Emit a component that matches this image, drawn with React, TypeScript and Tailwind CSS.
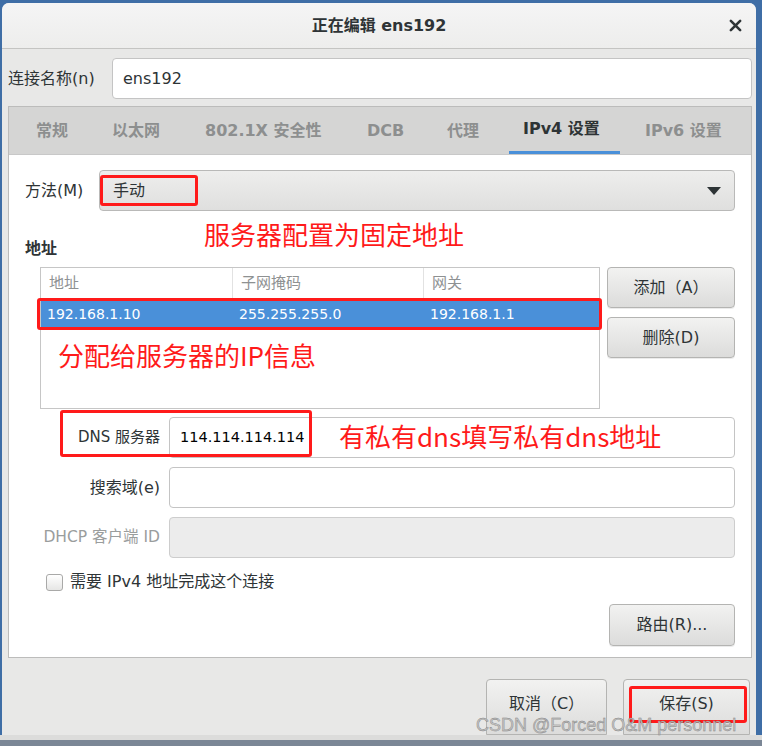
import React from "react";

const UI = '"DejaVu Sans", "Noto Sans CJK SC", sans-serif';
const CJK = '"Noto Sans CJK SC", "Noto Sans", sans-serif';

function Btn({ children, className = "" }: { children: React.ReactNode; className?: string }) {
  return (
    <div
      className={
        "flex items-center justify-center rounded-[4px] border border-[#b4b4b2] bg-gradient-to-b from-[#f2f2f1] to-[#dcdcdb] text-[16px] text-[#2e3436] shadow-[0_1px_0_rgba(0,0,0,0.08)] " +
        className
      }
    >
      {children}
    </div>
  );
}

function Entry({ children, disabled = false }: { children?: React.ReactNode; disabled?: boolean }) {
  return (
    <div
      className={
        "flex h-[41px] flex-1 items-center rounded-[4px] border pl-[10px] text-[14.5px] text-black " +
        (disabled ? "border-[#cdcdcd] bg-[#ececec]" : "border-[#c4c4c4] bg-white")
      }
    >
      {children}
    </div>
  );
}

export default function App() {
  return (
    <div
      className="relative flex h-[746px] w-[762px] flex-col overflow-hidden bg-[#3f6ea6]"
      style={{ fontFamily: UI }}
    >
      <div className="pl-[2px] pt-[3px]">
        <div className="flex h-[732px] w-[754px] flex-col rounded-t-[7px] bg-[#e8e8e7]">
          {/* Title bar */}
          <div className="grid h-[50px] grid-cols-[1fr_auto_1fr] items-center rounded-t-[7px] border-b border-[#c4c4c2] bg-gradient-to-b from-[#f5f5f5] to-[#ededec]">
            <div />
            <div className="text-[16px] font-bold text-[#2e3436]">正在编辑 ens192</div>
            <div className="flex justify-end pr-[14px]">
              <svg width="13" height="13" viewBox="0 0 14 14">
                <path d="M2 2 L12 12 M12 2 L2 12" stroke="#2e3436" strokeWidth="2.8" strokeLinecap="round" />
              </svg>
            </div>
          </div>

          {/* Connection name */}
          <div className="mt-[9px] flex items-center pl-[6px] pr-[4px]">
            <div className="w-[104px] text-[16px] text-[#2e3436]">连接名称(n)</div>
            <div className="flex h-[41px] flex-1 items-center rounded-[4px] border border-[#c4c4c4] bg-white pl-[10px] text-[16px] text-[#2e3436]">
              ens192
            </div>
          </div>

          {/* Notebook */}
          <div className="ml-[6px] mr-[4px] mt-[7px] flex flex-col border border-[#bcbcbb]">
            <div className="flex h-[47px] items-stretch bg-[#d5d5d4] pl-[13px] text-[16px] font-bold text-[#8d8f8f]">
              <div className="flex w-[76px] items-center pl-[14px]">常规</div>
              <div className="flex w-[93px] items-center pl-[14px]">以太网</div>
              <div className="flex w-[162px] items-center pl-[14px]">802.1X 安全性</div>
              <div className="flex w-[80px] items-center pl-[14px]">DCB</div>
              <div className="flex w-[76px] items-center pl-[14px]">代理</div>
              <div className="flex w-[111px] flex-col">
                <div className="flex flex-1 items-center pl-[14px] text-[#2e3436]">IPv4 设置</div>
                <div className="h-[3px] bg-[#4a90d9]" />
              </div>
              <div className="ml-[11px] flex items-center pl-[14px]">IPv6 设置</div>
            </div>

            <div className="flex h-[503px] flex-col border-t border-[#c8c8c8] bg-white px-[16px] pt-[15px]">
              {/* Method */}
              <div className="flex items-center">
                <div className="w-[74px] text-[16px] text-[#2e3436]">方法(M)</div>
                <div className="flex h-[41px] flex-1 items-center justify-between rounded-[4px] border border-[#b9b9b8] bg-gradient-to-b from-[#eeeeed] to-[#dfdfde] pl-[13px] pr-[13px] text-[16px] text-[#2e3436]">
                  <span>手动</span>
                  <svg width="14" height="8" viewBox="0 0 14 8">
                    <path d="M0 0 H14 L7 8 Z" fill="#2e3436" />
                  </svg>
                </div>
              </div>

              <div className="mt-[28px] h-[20px] text-[16px] font-bold leading-[20px] text-[#2e3436]">地址</div>

              {/* Address table */}
              <div className="mt-[8px] flex pl-[15px]">
                <div className="h-[142px] w-[560px] border border-[#c6c6c6] bg-white">
                  <div className="grid h-[31px] grid-cols-[192px_191px_1fr] text-[15px] text-[#8e9192]">
                    <div className="flex items-center border-r border-[#e2e2e2] pl-[8px]">地址</div>
                    <div className="flex items-center border-r border-[#e2e2e2] pl-[8px]">子网掩码</div>
                    <div className="flex items-center pl-[8px]">网关</div>
                  </div>
                  <div className="mt-[1px] grid h-[29px] grid-cols-[192px_191px_1fr] bg-[#4a90d9] text-[14px] text-white">
                    <div className="flex items-center pl-[6px]">192.168.1.10</div>
                    <div className="flex items-center pl-[6px]">255.255.255.0</div>
                    <div className="flex items-center pl-[6px]">192.168.1.1</div>
                  </div>
                </div>
                <div className="ml-[7px] flex flex-1 flex-col gap-[9px]">
                  <Btn className="h-[41px]">添加（A）</Btn>
                  <Btn className="h-[41px]">删除(D)</Btn>
                </div>
              </div>

              {/* Entries */}
              <div className="mt-[8px] flex flex-col gap-[9px]">
                <div className="flex items-center">
                  <div className="w-[135px] text-right text-[15px] text-[#2e3436]">DNS 服务器</div>
                  <div className="w-[9px]" />
                  <Entry>114.114.114.114</Entry>
                </div>
                <div className="flex items-center">
                  <div className="w-[135px] text-right text-[16px] text-[#2e3436]">搜索域(e)</div>
                  <div className="w-[9px]" />
                  <Entry />
                </div>
                <div className="flex items-center">
                  <div className="w-[135px] whitespace-nowrap text-right text-[15.5px] text-[#9a9d9d]">DHCP 客户端 ID</div>
                  <div className="w-[9px]" />
                  <Entry disabled />
                </div>
              </div>

              {/* Checkbox */}
              <div className="mt-[12px] flex items-center pl-[21px]">
                <div className="h-[17px] w-[17px] rounded-[3px] border border-[#a9a9a8] bg-gradient-to-b from-white to-[#e6e6e5]" />
                <div className="ml-[7px] text-[16px] text-[#2e3436]">需要 IPv4 地址完成这个连接</div>
              </div>

              <div className="mt-[10px] flex justify-end">
                <Btn className="h-[42px] w-[126px]">路由(R)...</Btn>
              </div>
            </div>
          </div>

          {/* Dialog buttons */}
          <div className="mt-[21px] flex flex-1 justify-end gap-[16px] pr-[6px]">
            <Btn className="h-[56px] w-[121px] rounded-b-none pb-[6px]">取消（C）</Btn>
            <Btn className="h-[56px] w-[127px] rounded-b-none pb-[6px]">保存(S)</Btn>
          </div>
        </div>
      </div>
      <div className="h-[5px] bg-[#dcdcdb]" />
      <div className="flex-1 bg-[#7b8796]" />

      {/* Annotations (overlay) */}
      <div className="pointer-events-none absolute left-[100px] top-[175px] h-[31px] w-[98px] rounded-[3px] border-[3px] border-[#ff1a1a]" />
      <div className="pointer-events-none absolute left-[37px] top-[298px] h-[32px] w-[565px] rounded-[3px] border-[3px] border-[#ff1a1a]" />
      <div className="pointer-events-none absolute left-[60px] top-[410px] h-[47px] w-[252px] rounded-[3px] border-[3px] border-[#ff1a1a]" />
      <div className="pointer-events-none absolute left-[629px] top-[686px] h-[37px] w-[118px] rounded-[3px] border-[3px] border-[#ff1a1a]" />

      <div
        className="absolute left-[204px] top-[221px] whitespace-nowrap text-[26px] leading-none text-[#ff1a1a]"
        style={{ fontFamily: CJK }}
      >
        服务器配置为固定地址
      </div>
      <div
        className="absolute left-[58px] top-[342px] whitespace-nowrap text-[26px] leading-none text-[#ff1a1a]"
        style={{ fontFamily: CJK }}
      >
        分配给服务器的IP信息
      </div>
      <div
        className="absolute left-[339px] top-[423px] whitespace-nowrap text-[26px] leading-none text-[#ff1a1a]"
        style={{ fontFamily: CJK }}
      >
        有私有dns填写私有dns地址
      </div>

      <div
        className="absolute left-[476px] top-[716px] whitespace-nowrap text-[18px] leading-none text-[#c4c4c4]"
        style={{ fontFamily: '"Liberation Sans", Arial, sans-serif', WebkitTextStroke: "0.4px #808080" }}
      >
        CSDN @Forced O&amp;M personnel
      </div>
    </div>
  );
}
